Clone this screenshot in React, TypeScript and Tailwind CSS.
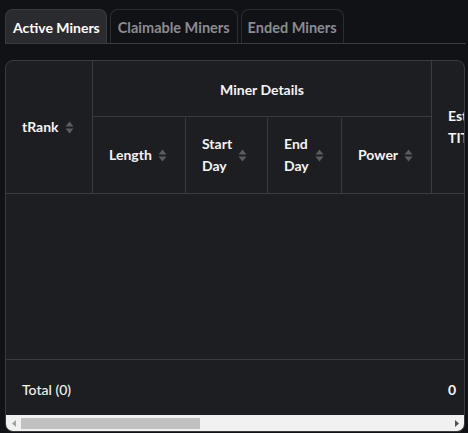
import React from "react";

const SortIcon = () => (
  <svg width="9" height="13" viewBox="0 0 9 13" className="ml-[6px] shrink-0" aria-hidden>
    <path d="M4.5 0.5 L8.5 5.5 L0.5 5.5 Z" fill="#5b5c61" />
    <path d="M0.5 7.5 L8.5 7.5 L4.5 12.5 Z" fill="#5b5c61" />
  </svg>
);

const HeadCell = ({ label, wrap }: { label: string; wrap?: boolean }) => (
  <div className="flex items-center">
    <span className={wrap ? "w-min leading-[22px]" : "leading-[22px]"}>{label}</span>
    <SortIcon />
  </div>
);

export default function App() {
  return (
    <div
      className="w-[468px] h-[433px] overflow-hidden bg-[#111216] text-[#f4f4f5]"
      style={{ fontFamily: "Lato, 'Noto Sans', sans-serif" }}
    >
      {/* Tabs */}
      <div className="pt-[9px] ml-[5px] mr-[2px] flex gap-[3px] border-b border-[#3a3b3f]">
        <div className="h-[34px] pl-[7px] pr-[6px] pt-[2px] flex items-center rounded-t-[8px] border border-b-0 border-[#3a3b3f] bg-[#2a2b2f] text-[14px] font-bold text-white">
          Active Miners
        </div>
        <div className="h-[34px] px-[7px] pt-[2px] flex items-center rounded-t-[8px] border border-b-0 border-[#2c2d31] text-[14.5px] font-bold text-[#8b8c91]">
          Claimable Miners
        </div>
        <div className="h-[34px] px-[6px] pt-[2px] flex items-center rounded-t-[8px] border border-b-0 border-[#2c2d31] text-[14.5px] font-bold text-[#8b8c91]">
          Ended Miners
        </div>
      </div>

      {/* Table */}
      <div className="mt-[16px] ml-[5px] w-[460px] h-[372px] rounded-[8px] border border-[#3a3b3f] bg-[#1d1e22] overflow-hidden flex flex-col">
        <div className="overflow-hidden">
          <div className="w-[560px]">
            {/* Header */}
            <div className="flex h-[133px] border-b border-[#3a3b3f] text-[14px] font-bold">
              <div className="w-[87px] shrink-0 border-r border-[#3a3b3f] flex items-center pl-4">
                <HeadCell label="tRank" />
              </div>
              <div className="w-[339px] shrink-0 border-r border-[#3a3b3f] flex flex-col">
                <div className="h-[56px] pt-[3px] border-b border-[#3a3b3f] flex items-center justify-center">
                  Miner Details
                </div>
                <div className="h-[77px] pt-[1px] flex">
                  <div className="w-[93px] border-r border-[#3a3b3f] flex items-center pl-4">
                    <HeadCell label="Length" />
                  </div>
                  <div className="w-[82px] border-r border-[#3a3b3f] flex items-center pl-4">
                    <HeadCell label="Start Day" wrap />
                  </div>
                  <div className="w-[74px] border-r border-[#3a3b3f] flex items-center pl-4">
                    <HeadCell label="End Day" wrap />
                  </div>
                  <div className="flex-1 flex items-center pl-4">
                    <HeadCell label="Power" />
                  </div>
                </div>
              </div>
              <div className="w-[130px] shrink-0 flex items-center pl-4">
                <HeadCell label="Est. TITANX" wrap />
              </div>
            </div>

            {/* Body (empty) */}
            <div className="h-[166px] border-b border-[#3a3b3f]" />

            {/* Footer */}
            <div className="h-[55px] pt-[3px] flex items-center text-[14px]">
              <div className="w-[87px] shrink-0 pl-4 font-medium">Total (0)</div>
              <div className="w-[339px] shrink-0" />
              <div className="pl-4 font-bold">0</div>
            </div>
          </div>
        </div>

        {/* Scrollbar */}
        <div className="h-[16px] bg-[#f1f1f1] flex items-center">
          <div className="w-[15px] h-full flex items-center justify-center">
            <svg width="4" height="7" viewBox="0 0 4 7" aria-hidden>
              <path d="M4 0 L0 3.5 L4 7 Z" fill="#a3a3a3" />
            </svg>
          </div>
          <div className="w-[179px] h-[11px] bg-[#c1c1c1]" />
          <div className="flex-1" />
          <div className="w-[15px] h-full flex items-center justify-center">
            <svg width="4" height="7" viewBox="0 0 4 7" aria-hidden>
              <path d="M0 0 L4 3.5 L0 7 Z" fill="#505050" />
            </svg>
          </div>
        </div>
      </div>
    </div>
  );
}
